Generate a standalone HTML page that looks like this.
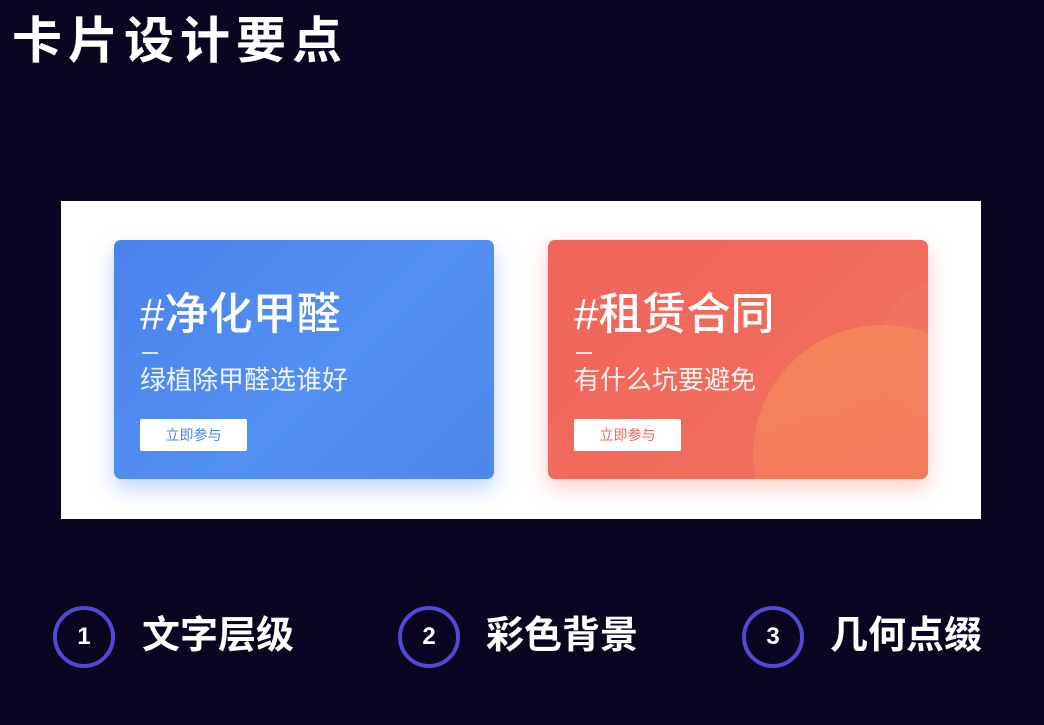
<!DOCTYPE html>
<html><head><meta charset="utf-8"><style>
*{margin:0;padding:0;box-sizing:border-box}
body{width:1044px;height:725px;background:#0a0520;position:relative;overflow:hidden;font-family:"Liberation Sans","Noto Sans CJK SC",sans-serif;color:#fff}
.title{position:absolute;left:12px;top:8px;font-size:50px;font-weight:bold;letter-spacing:6px;line-height:66px}
.panel{position:absolute;left:61px;top:201px;width:920px;height:318px;background:#fff}
.card{position:absolute;top:240px;width:380px;height:239px;border-radius:7px;overflow:hidden}
.blue{left:114px;background:linear-gradient(135deg,#4a82ec 0%,#5390f2 55%,#4c86ee 100%);box-shadow:0 10px 22px rgba(80,130,240,.35)}
.red{left:548px;background:linear-gradient(135deg,#f0655a 0%,#f2715f 100%);box-shadow:0 8px 22px rgba(240,100,90,.35)}
.h{position:absolute;left:26px;top:46px;font-size:44px;line-height:58px;font-weight:500}
.dash{position:absolute;left:28px;top:112px;width:16px;height:2px;background:rgba(255,255,255,.85)}
.s{position:absolute;left:26px;top:124px;font-size:26px;line-height:32px;color:rgba(255,255,255,.9)}
.btn{position:absolute;left:26px;top:179px;width:107px;height:32px;background:#fff;border-radius:2px;font-size:14px;text-align:center;line-height:32px}
.circle{position:absolute;width:62px;height:62px;border:4px solid #5448d8;border-radius:50%;top:606px;text-align:center;line-height:54px;font-size:24px;font-weight:bold}
.lab{position:absolute;top:612px;font-size:38px;font-weight:bold;line-height:48px}
</style></head><body>
<div class="title">卡片设计要点</div>
<div class="panel"></div>
<div class="card blue">
<div class="h">#净化甲醛</div><div class="dash"></div>
<div class="s">绿植除甲醛选谁好</div>
<div class="btn" style="color:#4a82ec">立即参与</div>
</div>
<div class="card red">
<div style="position:absolute;left:330px;top:40px;width:140px;height:140px;border-radius:50%;background:rgba(240,120,100,.5)"></div>
<div style="position:absolute;left:205px;top:85px;width:260px;height:260px;border-radius:50%;background:linear-gradient(160deg,rgba(246,140,90,.8),rgba(244,120,95,.2))"></div>
<div class="h">#租赁合同</div><div class="dash"></div>
<div class="s">有什么坑要避免</div>
<div class="btn" style="color:#f0655a">立即参与</div>
</div>
<div class="circle" style="left:53px">1</div><div class="lab" style="left:142px">文字层级</div>
<div class="circle" style="left:398px">2</div><div class="lab" style="left:486px">彩色背景</div>
<div class="circle" style="left:742px">3</div><div class="lab" style="left:830px">几何点缀</div>
</body></html>
